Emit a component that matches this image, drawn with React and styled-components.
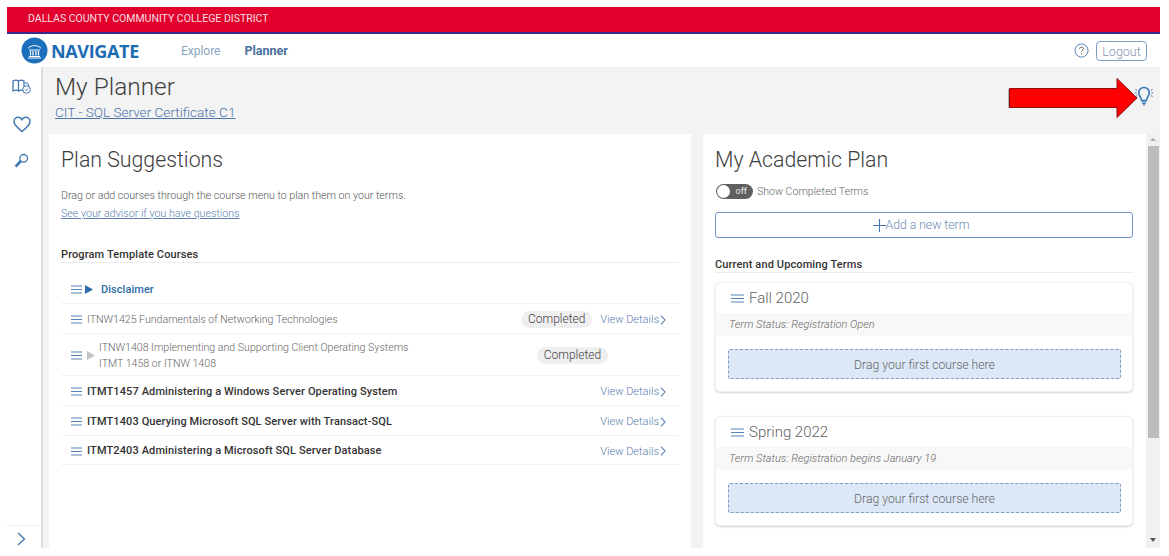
import React from "react";
import styled, { createGlobalStyle } from "styled-components";

const Global = createGlobalStyle`
  html, body { margin: 0; padding: 0; background: #fff; }
  * { box-sizing: border-box; }
  body { font-family: Roboto, "Liberation Sans", sans-serif; font-weight: 300; color: #555; }
`;

const Page = styled.div`
  position: relative;
  width: 1169px;
  height: 556px;
  padding: 7px 9px 8px 7px;
  overflow: hidden;
  display: flex;
  flex-direction: column;
`;
const Banner = styled.div`
  height: 27px;
  flex: none;
  background: #e2012d;
  border-bottom: 2px solid #3b2a8c;
  color: #f6dfe0;
  font-size: 10.5px;
  font-weight: 400;
  line-height: 23px;
  padding-left: 21px;
`;
const Nav = styled.div`
  height: 33px;
  flex: none;
  display: flex;
  align-items: center;
  padding: 0 13px 0 14px;
`;
const Brand = styled.div`
  display: flex;
  align-items: center;
  gap: 3px;
  font-family: "Open Sans", sans-serif;
  font-size: 18px;
  font-weight: 700;
  color: #1c6cb4;
  letter-spacing: -0.35px;
`;
const NavLink = styled.span`
  font-size: ${(p) => (p.$active ? 12.5 : 12)}px;
  font-weight: ${(p) => (p.$active ? 700 : 400)};
  color: ${(p) => (p.$active ? "#47709b" : "#8ba3c2")};
  margin-left: ${(p) => p.$gap}px;
`;
const NavRight = styled.div`
  margin-left: auto;
  display: flex;
  align-items: center;
  gap: 7px;
`;
const Logout = styled.div`
  border: 1px solid #7c9ec6;
  border-radius: 4px;
  height: 20px;
  width: 51px;
  font-size: 12.5px;
  line-height: 19px;
  text-align: center;
  color: #7f96b4;
`;
const Body = styled.div`
  flex: 1;
  min-height: 0;
  display: flex;
`;
const Side = styled.div`
  width: 36px;
  flex: none;
  background: #fff;
  border-right: 2px solid #dcdcdc;
  display: flex;
  flex-direction: column;
  align-items: center;
  padding: 10px 5px 0 0;
`;
const SideIcon = styled.div`
  height: 20px;
  margin-bottom: 17px;
  display: flex;
  align-items: center;
  justify-content: center;
`;
const SideFoot = styled.div`
  margin-top: auto;
  width: 34px;
  margin-right: -5px;
  height: 23px;
  border-top: 1px solid #f0f0f0;
  display: flex;
  align-items: center;
  justify-content: center;
  padding: 3px 6px 0 0;
`;
const Main = styled.div`
  flex: 1;
  min-width: 0;
  background: #f3f3f4;
  display: flex;
  flex-direction: column;
`;
const Head = styled.div`
  height: 67px;
  flex: none;
  padding: 5px 0 0 12px;
`;
const Title = styled.h1`
  margin: 0;
  font-size: 24.4px;
  font-weight: 300;
  line-height: 30px;
  color: #3f3f3f;
`;
const SubLink = styled.a`
  display: inline-block;
  font-size: 13.6px;
  line-height: 18px;
  font-weight: 300;
  color: #4d74a8;
  text-decoration: underline;
`;
const Bulb = styled.div`
  position: absolute;
  left: 1134px;
  top: 85px;
  width: 20px;
  height: 24px;
`;
const ArrowShape = styled.svg`
  position: absolute;
  left: 1006px;
  top: 76px;
`;
const Columns = styled.div`
  flex: 1;
  min-height: 0;
  display: flex;
  padding-left: 6px;
  gap: 12px;
`;
const LeftPanel = styled.section`
  width: 642px;
  flex: none;
  background: #fff;
  padding: 13px 12px 0 12px;
  overflow: hidden;
`;
const RightWrap = styled.div`
  width: 457px;
  flex: none;
  display: flex;
  background: #fff;
`;
const RightPanel = styled.section`
  width: 443px;
  flex: none;
  padding: 13px 12px 0 12px;
  overflow: hidden;
`;
const ScrollBar = styled.div`
  width: 14px;
  flex: none;
  background: #f1f1f1;
  display: flex;
  flex-direction: column;
  align-items: center;
  padding: 4px 0 6px;
`;
const Tri = styled.div`
  width: 0;
  height: 0;
  border-left: 3px solid transparent;
  border-right: 3px solid transparent;
  ${(p) => (p.$down ? "border-top: 4px solid #555;" : "border-bottom: 3px solid #aaa;")}
  ${(p) => (p.$down ? "margin-top: auto;" : "margin-bottom: 5px;")}
`;
const Thumb = styled.div`
  width: 11px;
  height: 292px;
  background: #bdbdbd;
`;
const H2 = styled.h2`
  margin: 0;
  font-size: 21.3px;
  font-weight: 300;
  line-height: 26px;
  color: #404040;
`;
const Para = styled.p`
  margin: ${(p) => p.$mt}px 0 0;
  font-size: 10.65px;
  line-height: 16px;
  color: #555;
`;
const AdvLink = styled.a`
  font-size: 10.7px;
  color: #5a7fae;
  text-decoration: underline;
`;
const SectionHead = styled.div`
  margin-top: ${(p) => p.$mt}px;
  height: 15px;
  border-bottom: 1px solid #ececec;
  font-size: 11px;
  font-weight: 500;
  line-height: 14px;
  color: #333;
  letter-spacing: 0.12px;
`;
const Rows = styled.div`
  margin-top: 12px;
`;
const Row = styled.div`
  height: ${(p) => p.$h}px;
  border-bottom: 1px solid #f3f3f3;
  display: flex;
  align-items: center;
  padding: ${(p) => (p.$flush ? 0 : 2)}px 13px 0 10px;
`;
const RowText = styled.div`
  font-size: ${(p) => (p.$strong ? 11 : 10.6)}px;
  line-height: 16px;
  font-weight: ${(p) => (p.$strong ? 500 : 300)};
  color: ${(p) => (p.$strong ? "#333" : "#666")};
  margin-left: ${(p) => p.$ml}px;
  letter-spacing: ${(p) => (p.$strong ? "0.12px" : "0")};
`;
const DisclaimerText = styled.span`
  font-size: 11px;
  font-weight: 500;
  color: #2f6ba8;
  margin-left: 8px;
  letter-spacing: 0.05px;
`;
const Pill = styled.span`
  background: #efefef;
  border-radius: 9px;
  height: 17px;
  width: 71px;
  font-size: 12px;
  font-weight: 300;
  line-height: 17px;
  text-align: center;
  color: #444;
  margin-left: auto;
  margin-right: ${(p) => (p.$offset ? 58 : 0)}px;
`;
const Details = styled.span`
  display: flex;
  align-items: center;
  gap: 1px;
  font-size: 11px;
  font-weight: 300;
  color: #5a7fae;
  margin-left: ${(p) => (p.$auto ? "auto" : "8px")};
`;
const ToggleRow = styled.div`
  margin-top: 10px;
  height: 16px;
  display: flex;
  align-items: center;
  gap: 4px;
  font-size: 10.6px;
  color: #666;
`;
const Toggle = styled.div`
  position: relative;
  margin-left: 1px;
  width: 37px;
  height: 15px;
  border-radius: 8px;
  background: #5f5f5f;
  color: #eee;
  font-size: 9px;
  font-weight: 400;
  line-height: 15px;
  text-align: right;
  padding-right: 6px;
`;
const Knob = styled.span`
  position: absolute;
  left: 1px;
  top: 1px;
  width: 13px;
  height: 13px;
  border-radius: 50%;
  background: #fff;
`;
const AddButton = styled.div`
  margin-top: 13px;
  height: 26px;
  width: 418px;
  border: 1px solid #6e97c8;
  border-radius: 3px;
  display: flex;
  align-items: center;
  justify-content: center;
  padding-right: 6px;
  font-size: 12.2px;
  color: #6c8cb4;
`;
const Card = styled.div`
  width: 418px;
  height: 110px;
  margin-top: ${(p) => p.$mt}px;
  border-radius: 5px;
  background: #fff;
  border: 1px solid #efefef;
  box-shadow: 0 1px 2px rgba(0, 0, 0, 0.18);
  overflow: hidden;
`;
const CardHead = styled.div`
  height: 30px;
  display: flex;
  align-items: center;
  gap: 5px;
  padding-left: 15px;
  font-size: 15px;
  color: #5f5f5f;
`;
const CardStatus = styled.div`
  height: 23px;
  background: #f8f8f8;
  padding-left: 13px;
  font-size: 11px;
  font-style: italic;
  line-height: 24px;
  color: #666;
`;
const Drop = styled.div`
  margin: 13px 11px 0 12px;
  height: 30px;
  background: #dce8f8;
  border: 1px dashed #7f9cc2;
  border-radius: 2px;
  font-size: 12.2px;
  line-height: 30px;
  text-align: center;
  color: #666;
`;

const Burger = ({ w = 11, color = "#5684ba" }) => (
  <svg width={w} height="9" viewBox={`0 0 ${w} 9`}>
    <path d={`M0 1H${w}M0 4.5H${w}M0 8H${w}`} stroke={color} strokeWidth="1.2" fill="none" />
  </svg>
);
const Chevron = ({ w = 6, h = 10 }) => (
  <svg width={w} height={h} viewBox="0 0 6 10">
    <path d="M1 .7 5 5 1 9.3" stroke="#4f7fb5" strokeWidth="1.1" fill="none" />
  </svg>
);
const Play = ({ color, ml = 3 }) => (
  <svg width="8" height="9" viewBox="0 0 8 9" style={{ marginLeft: ml }}>
    <path d="M0 0 8 4.5 0 9Z" fill={color} />
  </svg>
);
const Logo = () => (
  <svg width="27" height="27" viewBox="0 0 27 27">
    <circle cx="13.5" cy="13.5" r="13" fill="#1c6fbb" />
    <g stroke="#fff" fill="none" strokeWidth="1">
      <path d="M7 11.3c3.5-3.6 9.5-3.6 13 0" />
      <path d="M8 13H19M8 19.5H19M7 21H20" />
      <path d="M9.5 14v4.5M12 14v4.5M15 14v4.5M17.5 14v4.5" strokeWidth="1.2" />
    </g>
  </svg>
);
const Help = () => (
  <svg width="15" height="15" viewBox="0 0 16 16">
    <circle cx="8" cy="8" r="7" fill="none" stroke="#4f7fb5" strokeWidth="1" />
    <path d="M5.9 6.2c.2-2.6 4.3-2.4 4.2 0 0 1.6-2.1 1.6-2.1 3.2" fill="none" stroke="#555" strokeWidth="1" />
    <circle cx="8" cy="11.4" r=".7" fill="#555" />
  </svg>
);
const MapCheck = () => (
  <svg width="20" height="18" viewBox="0 0 20 18" fill="none" stroke="#3f75b0" strokeWidth="1.3">
    <path d="M1 3c2-1 4-1 5.5 0v10C5 12 3 12 1 13ZM6.5 3C8 2 10 2 12 3v5M6.5 13c1.5-1 3-1 4.5-.6" />
    <circle cx="14.5" cy="11.5" r="3.8" strokeWidth="1" />
    <path d="m13 11.5 1.2 1.2 2-2.2M13 5h2.5l1.5 3" strokeWidth="1" />
  </svg>
);
const Heart = () => (
  <svg width="18" height="17" viewBox="0 0 18 17">
    <path d="M9 15.5C4 11.6 1 9 1 5.6 1 3 3 1.2 5.2 1.2c1.6 0 3 .9 3.8 2.4.8-1.5 2.2-2.4 3.8-2.4C15 1.2 17 3 17 5.6c0 3.4-3 6-8 9.9Z" fill="none" stroke="#3f75b0" strokeWidth="1.5" />
  </svg>
);
const KeyIcon = () => (
  <svg width="15" height="16" viewBox="0 0 15 16" fill="none" stroke="#3f75b0">
    <circle cx="9.7" cy="5.3" r="3.8" strokeWidth="1.3" />
    <path d="M6.8 8 1.6 13.6" strokeWidth="2.6" />
  </svg>
);
const BulbIcon = () => (
  <svg width="20" height="24" viewBox="0 0 20 24" fill="none" stroke="#2f71b5" strokeWidth="1.5">
    <path d="M10 2.5a5.3 5.3 0 0 0-5.3 5.4c0 2.6 2.3 3.8 2.8 7.6h5c.5-3.8 2.8-5 2.8-7.6A5.3 5.3 0 0 0 10 2.5Z" />
    <path d="M7.8 17h4.4M8.4 18.6h3.2M9.2 20h1.6" strokeWidth="1.2" />
    <path d="M1.5 4.5 3 5.3M1 8h1.6M1.5 11.5 3 10.7M18.5 4.5 17 5.3M19 8h-1.6M18.5 11.5 17 10.7" strokeWidth="1" />
  </svg>
);

const Arrow = () => (
  <ArrowShape width="134" height="44" viewBox="0 0 134 44">
    <path d="M2 13H4V32H2Z" fill="#8c8c8c" opacity=".6" />
    <path d="M3.5 12.5H111V2.5L131 22 111 41.5V31.5H3.5Z" fill="#fe0000" stroke="#8a1010" strokeWidth="1" />
  </ArrowShape>
);

const Term = ({ name, status, mt }) => (
  <Card $mt={mt}>
    <CardHead>
      <Burger w={13} />
      {name}
    </CardHead>
    <CardStatus>{status}</CardStatus>
    <Drop>Drag your first course here</Drop>
  </Card>
);

export default function App() {
  return (
    <Page>
      <Global />
      <Banner>DALLAS COUNTY COMMUNITY COLLEGE DISTRICT</Banner>
      <Nav>
        <Brand>
          <Logo />
          NAVIGATE
        </Brand>
        <NavLink $gap={42}>Explore</NavLink>
        <NavLink $gap={24} $active>Planner</NavLink>
        <NavRight>
          <Help />
          <Logout>Logout</Logout>
        </NavRight>
      </Nav>
      <Body>
        <Side>
          <SideIcon><MapCheck /></SideIcon>
          <SideIcon><Heart /></SideIcon>
          <SideIcon><KeyIcon /></SideIcon>
          <SideFoot>
            <svg width="9" height="14" viewBox="0 0 9 14">
              <path d="M1 1l6.5 6L1 13" stroke="#3f75b0" strokeWidth="1.3" fill="none" />
            </svg>
          </SideFoot>
        </Side>
        <Main>
          <Head>
            <Title>My Planner</Title>
            <SubLink>CIT - SQL Server Certificate C1</SubLink>
          </Head>
          <Columns>
            <LeftPanel>
              <H2>Plan Suggestions</H2>
              <Para $mt={15}>Drag or add courses through the course menu to plan them on your terms.</Para>
              <Para $mt={2}><AdvLink>See your advisor if you have questions</AdvLink></Para>
              <SectionHead $mt={26}>Program Template Courses</SectionHead>
              <Rows>
                <Row $h={29} $flush>
                  <Burger />
                  <Play color="#2f6ba8" />
                  <DisclaimerText>Disclaimer</DisclaimerText>
                </Row>
                <Row $h={30}>
                  <Burger />
                  <RowText $ml={5}>ITNW1425 Fundamentals of Networking Technologies</RowText>
                  <Pill>Completed</Pill>
                  <Details>View Details <Chevron /></Details>
                </Row>
                <Row $h={42}>
                  <Burger />
                  <Play color="#c4c4c4" ml={5} />
                  <RowText $ml={4}>
                    ITNW1408 Implementing and Supporting Client Operating Systems
                    <br />
                    ITMT 1458 or ITNW 1408
                  </RowText>
                  <Pill $offset>Completed</Pill>
                </Row>
                <Row $h={30}>
                  <Burger />
                  <RowText $ml={5} $strong>ITMT1457 Administering a Windows Server Operating System</RowText>
                  <Details $auto>View Details <Chevron /></Details>
                </Row>
                <Row $h={30}>
                  <Burger />
                  <RowText $ml={5} $strong>ITMT1403 Querying Microsoft SQL Server with Transact-SQL</RowText>
                  <Details $auto>View Details <Chevron /></Details>
                </Row>
                <Row $h={29}>
                  <Burger />
                  <RowText $ml={5} $strong>ITMT2403 Administering a Microsoft SQL Server Database</RowText>
                  <Details $auto>View Details <Chevron /></Details>
                </Row>
              </Rows>
            </LeftPanel>
            <RightWrap>
              <RightPanel>
                <H2>My Academic Plan</H2>
                <ToggleRow>
                  <Toggle><Knob />off</Toggle>
                  Show Completed Terms
                </ToggleRow>
                <AddButton>
                  <svg width="13" height="13" viewBox="0 0 13 13">
                    <path d="M6.5 0V13M0 6.5H13" stroke="#3f75b0" strokeWidth="1.1" />
                  </svg>
                  Add a new term
                </AddButton>
                <SectionHead $mt={20}>Current and Upcoming Terms</SectionHead>
                <Term mt={9} name="Fall 2020" status="Term Status: Registration Open" />
                <Term mt={24} name="Spring 2022" status="Term Status: Registration begins January 19" />
              </RightPanel>
              <ScrollBar>
                <Tri />
                <Thumb />
                <Tri $down />
              </ScrollBar>
            </RightWrap>
          </Columns>
        </Main>
      </Body>
      <Arrow />
      <Bulb><BulbIcon /></Bulb>
    </Page>
  );
}
